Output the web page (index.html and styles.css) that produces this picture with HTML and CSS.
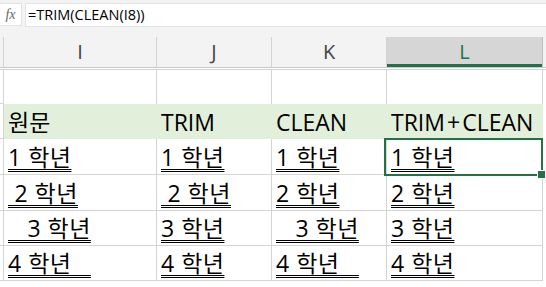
FILE: index.html
```html
<!DOCTYPE html>
<html lang="ko">
<head>
    <meta charset="UTF-8">
    <title>TRIM CLEAN</title>
    <link rel="stylesheet" href="styles.css">
</head>
<body>
    <div class="formula-bar">
        <div class="fx">fx</div>
        <div class="formula">=TRIM(CLEAN(I8))</div>
    </div>

    <div class="colheads">
        <div class="ch"></div>
        <div class="ch">I</div>
        <div class="ch">J</div>
        <div class="ch">K</div>
        <div class="ch active">L</div>
        <div class="ch last"></div>
    </div>

    <div class="sheet">
        <!-- empty row -->
        <div class="cell edge"></div>
        <div class="cell blank"></div>
        <div class="cell blank"></div>
        <div class="cell blank"></div>
        <div class="cell blank"></div>
        <div class="cell last"></div>

        <!-- title row -->
        <div class="cell edge"></div>
        <div class="cell title">원문</div>
        <div class="cell title">TRIM</div>
        <div class="cell title">CLEAN</div>
        <div class="cell title">TRIM<span class="plus">+</span>CLEAN</div>
        <div class="cell last"></div>

        <div class="cell edge"></div>
        <div class="cell"><span class="val">1 학년</span></div>
        <div class="cell"><span class="val">1 학년</span></div>
        <div class="cell"><span class="val">1 학년</span></div>
        <div class="cell"><span class="val">1 학년</span></div>
        <div class="cell last"></div>

        <div class="cell edge"></div>
        <div class="cell"><span class="val"> 2 학년</span></div>
        <div class="cell"><span class="val"> 2 학년</span></div>
        <div class="cell"><span class="val">2 학년</span></div>
        <div class="cell"><span class="val">2 학년</span></div>
        <div class="cell last"></div>

        <div class="cell edge"></div>
        <div class="cell"><span class="val">   3 학년</span></div>
        <div class="cell"><span class="val">3 학년</span></div>
        <div class="cell"><span class="val">   3 학년</span></div>
        <div class="cell"><span class="val">3 학년</span></div>
        <div class="cell last"></div>

        <div class="cell edge"></div>
        <div class="cell"><span class="val">4 학년   </span></div>
        <div class="cell"><span class="val">4 학년</span></div>
        <div class="cell"><span class="val">4 학년   </span></div>
        <div class="cell"><span class="val">4 학년</span></div>
        <div class="cell last"></div>

        <!-- active cell L8 -->
        <div class="selection"><span class="handle"></span></div>
    </div>
</body>
</html>
```

FILE: styles.css
```css
body {
    margin: 0;
    padding: 0;
    width: 546px;
    height: 287px;
    overflow: hidden;
    background-color: #fff;
    font-family: "Open Sans", "Noto Sans CJK KR", sans-serif;
    color: #000;
}
.formula-bar {
    display: flex;
    gap: 3px;
    height: 37px;
    padding-top: 3px;
    box-sizing: border-box;
    background-color: #f3f3f3;
}
.fx {
    width: 22px;
    height: 23px;
    box-sizing: border-box;
    background-color: #fff;
    border: 1px solid #e3e3e3;
    border-left: none;
    font-family: "Liberation Serif", serif;
    font-style: italic;
    font-size: 14px;
    color: #666;
    text-align: center;
    line-height: 22px;
}
.formula {
    flex: 1;
    height: 24px;
    box-sizing: border-box;
    background-color: #fff;
    border: 1px solid #e3e3e3;
    border-right: none;
    padding-left: 2px;
    font-size: 14.5px;
    line-height: 21px;
}
.colheads {
    display: grid;
    grid-template-columns: 4px 153px 115px 115px 156px 1fr;
    height: 31px;
    box-sizing: border-box;
    background-color: #f3f3f3;
    border-bottom: 1px solid #c8c8c8;
}
.ch {
    border-right: 1px solid #d4d4d4;
    text-align: center;
    font-size: 20px;
    line-height: 30px;
    color: #444;
}
.ch.active {
    background-color: #d6d6d6;
    color: #217346;
    border-right-color: #bdbdbd;
    box-shadow: inset 0 -3px 0 #217346;
}
.ch.last {
    border-right: none;
}
.sheet {
    position: relative;
    display: grid;
    grid-template-columns: 4px 153px 115px 115px 156px 1fr;
    grid-template-rows: 34px 35px 36px 36px 35px 35px;
    margin-top: 1px;
    border-top: 1px solid #d4d4d4;
}
.cell {
    box-sizing: border-box;
    border-right: 1px solid #d4d4d4;
    border-bottom: 1px solid #d4d4d4;
    display: flex;
    align-items: flex-end;
    padding: 0 0 5px 4px;
    font-size: 23px;
    line-height: 1;
    white-space: pre;
}
.cell.blank {
    border-bottom: none;
}
.cell.edge {
    padding: 0;
}
.cell.last {
    border-right: none;
    border-bottom: none;
}
.cell.title {
    background-color: #e2efda;
    border-right-color: #e2efda;
    border-bottom: none;
}
.plus {
    padding: 0 2px;
}
.val {
    letter-spacing: 0.5px;
    text-decoration: underline double;
    text-decoration-thickness: 1px;
    text-underline-offset: 3px;
}
.selection {
    position: absolute;
    left: 384px;
    top: 68px;
    width: 159px;
    height: 38px;
    box-sizing: border-box;
    border: 2px solid #217346;
    pointer-events: none;
}
.handle {
    position: absolute;
    right: -5px;
    bottom: -5px;
    width: 7px;
    height: 7px;
    background-color: #217346;
    border: 1px solid #fff;
}
```
